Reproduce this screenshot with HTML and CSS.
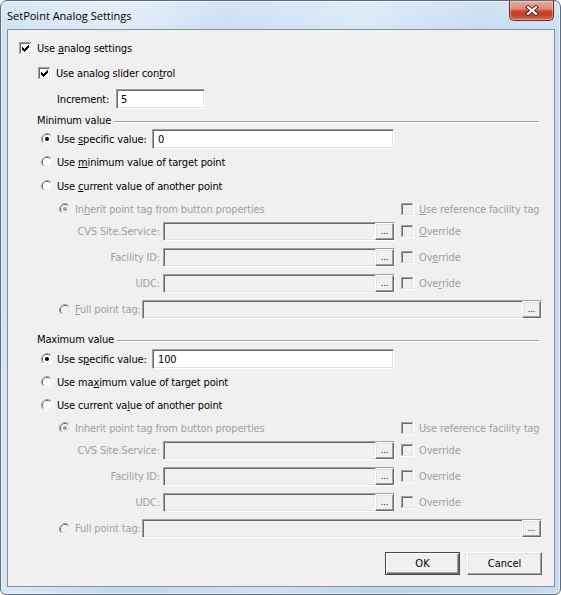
FILE: index.html
```html
<!DOCTYPE html>
<html>
<head>
<meta charset="utf-8">
<title>SetPoint Analog Settings</title>
<link rel="stylesheet" href="styles.css">
</head>
<body>
<svg class="defs" width="0" height="0" aria-hidden="true">
  <defs>
    <symbol id="cb-frame" viewBox="0 0 13 13">
      <path fill="#a0a0a0" d="M0 0h12v1H1v11H0z"/>
      <path fill="#ffffff" d="M12 0h1v13H0v-1h12z"/>
      <path fill="#696969" d="M1 1h10v1H2v9H1z"/>
      <path fill="#e3e3e3" d="M11 1h1v11H1v-1h10z"/>
    </symbol>
    <symbol id="cb-on" viewBox="0 0 13 13">
      <use href="#cb-frame"/>
      <rect x="2" y="2" width="9" height="9" fill="#ffffff"/>
      <path fill="#000" shape-rendering="crispEdges" d="M3 5h1v3H3zM4 6h1v3H4zM5 7h1v3H5zM6 6h1v3H6zM7 5h1v3H7zM8 4h1v3H8zM9 3h1v3H9z"/>
    </symbol>
    <symbol id="cb-dis" viewBox="0 0 13 13">
      <use href="#cb-frame"/>
      <rect x="2" y="2" width="9" height="9" fill="#f0f0f0"/>
    </symbol>
    <symbol id="rd-frame" viewBox="0 0 12 12">
      <path fill="none" stroke="#a0a0a0" d="M2.11 9.89A5.5 5.5 0 0 1 9.89 2.11"/>
      <path fill="none" stroke="#ffffff" d="M9.89 2.11A5.5 5.5 0 0 1 2.11 9.89"/>
      <path fill="none" stroke="#696969" d="M2.82 9.18A4.5 4.5 0 0 1 9.18 2.82"/>
      <path fill="none" stroke="#e3e3e3" d="M9.18 2.82A4.5 4.5 0 0 1 2.82 9.18"/>
    </symbol>
    <symbol id="rd-on" viewBox="0 0 12 12">
      <use href="#rd-frame"/>
      <circle cx="6" cy="6" r="4" fill="#ffffff"/>
      <circle cx="6" cy="6" r="2" fill="#000"/>
    </symbol>
    <symbol id="rd-off" viewBox="0 0 12 12">
      <use href="#rd-frame"/>
      <circle cx="6" cy="6" r="4" fill="#ffffff"/>
    </symbol>
    <symbol id="rd-on-dis" viewBox="0 0 12 12">
      <use href="#rd-frame"/>
      <circle cx="6" cy="6" r="4" fill="#f0f0f0"/>
      <circle cx="6" cy="6" r="2" fill="#a0a0a0"/>
    </symbol>
    <symbol id="rd-off-dis" viewBox="0 0 12 12">
      <use href="#rd-frame"/>
      <circle cx="6" cy="6" r="4" fill="#f0f0f0"/>
    </symbol>
  </defs>
</svg>

<div class="window">
  <div class="titlebar">
    <span class="title">SetPoint Analog Settings</span>
    <div class="close">
      <svg width="14" height="11" viewBox="0 0 14 11">
        <path d="M3 2.2L11 8.8M11 2.2L3 8.8" stroke="#4d2017" stroke-width="4" stroke-linecap="square"/>
        <path d="M3 2.2L11 8.8M11 2.2L3 8.8" stroke="#ffffff" stroke-width="2.2" stroke-linecap="square"/>
      </svg>
    </div>
  </div>

  <div class="client">
    <div class="row i0">
      <svg class="cb"><use href="#cb-on"/></svg>
      <span>Use <u>a</u>nalog settings</span>
    </div>
    <div class="row i1 mt5">
      <svg class="cb"><use href="#cb-on"/></svg>
      <span>Use analog slider con<u>t</u>rol</span>
    </div>
    <div class="row iinc mt6">
      <span class="inc-label">Increment:</span>
      <div class="edit inc-edit">5</div>
    </div>

    <div class="legend mt3"><span>Minimum value</span><div class="rule"></div></div>
    <div class="row i2 mt1">
      <svg class="rd"><use href="#rd-on"/></svg>
      <span class="spec-label">Use <u>s</u>pecific value:</span>
      <div class="edit spec-edit">0</div>
    </div>
    <div class="row i2 mt3">
      <svg class="rd"><use href="#rd-off"/></svg>
      <span>Use <u>m</u>inimum value of target point</span>
    </div>
    <div class="row i2 mt4">
      <svg class="rd"><use href="#rd-off"/></svg>
      <span>Use <u>c</u>urrent value of another point</span>
    </div>
    <div class="row split i3 mt3 dis">
      <div class="cell"><svg class="rd"><use href="#rd-on-dis"/></svg><span>In<u>h</u>erit point tag from button properties</span></div>
      <div class="cell"><svg class="cb"><use href="#cb-dis"/></svg><span><u>U</u>se reference facility tag</span></div>
    </div>
    <div class="row h19 split i3 mt3 dis">
      <div class="cell"><span class="field-label">CVS Site.Service:</span><div class="edit dis-edit field-edit"><span class="dots">...</span></div></div>
      <div class="cell"><svg class="cb"><use href="#cb-dis"/></svg><span><u>O</u>verride</span></div>
    </div>
    <div class="row h19 split i3 mt7 dis">
      <div class="cell"><span class="field-label">Facility ID:</span><div class="edit dis-edit field-edit"><span class="dots">...</span></div></div>
      <div class="cell"><svg class="cb"><use href="#cb-dis"/></svg><span>Ov<u>e</u>rride</span></div>
    </div>
    <div class="row h19 split i3 mt7 dis">
      <div class="cell"><span class="field-label">UDC:</span><div class="edit dis-edit field-edit"><span class="dots">...</span></div></div>
      <div class="cell"><svg class="cb"><use href="#cb-dis"/></svg><span>Ove<u>r</u>ride</span></div>
    </div>
    <div class="row h19 i3 mt7 dis">
      <svg class="rd"><use href="#rd-off-dis"/></svg>
      <span class="full-label"><u>F</u>ull point tag:</span>
      <div class="edit dis-edit full-edit"><span class="dots">...</span></div>
    </div>

    <div class="legend mt12 max"><span>Maximum value</span><div class="rule"></div></div>
    <div class="row i2 mt2">
      <svg class="rd"><use href="#rd-on"/></svg>
      <span class="spec-label">Use s<u>p</u>ecific value:</span>
      <div class="edit spec-edit">100</div>
    </div>
    <div class="row i2 mt3">
      <svg class="rd"><use href="#rd-off"/></svg>
      <span>Use ma<u>x</u>imum value of target point</span>
    </div>
    <div class="row i2 mt3">
      <svg class="rd"><use href="#rd-off"/></svg>
      <span>Use current va<u>l</u>ue of another point</span>
    </div>
    <div class="row split i3 mt3 dis">
      <div class="cell"><svg class="rd"><use href="#rd-on-dis"/></svg><span>Inherit point tag from button properties</span></div>
      <div class="cell"><svg class="cb"><use href="#cb-dis"/></svg><span>Use reference facility tag</span></div>
    </div>
    <div class="row h19 split i3 mt3 dis">
      <div class="cell"><span class="field-label">CVS Site.Service:</span><div class="edit dis-edit field-edit"><span class="dots">...</span></div></div>
      <div class="cell"><svg class="cb"><use href="#cb-dis"/></svg><span>Override</span></div>
    </div>
    <div class="row h19 split i3 mt7 dis">
      <div class="cell"><span class="field-label">Facility ID:</span><div class="edit dis-edit field-edit"><span class="dots">...</span></div></div>
      <div class="cell"><svg class="cb"><use href="#cb-dis"/></svg><span>Override</span></div>
    </div>
    <div class="row h19 split i3 mt7 dis">
      <div class="cell"><span class="field-label">UDC:</span><div class="edit dis-edit field-edit"><span class="dots">...</span></div></div>
      <div class="cell"><svg class="cb"><use href="#cb-dis"/></svg><span>Override</span></div>
    </div>
    <div class="row h19 i3 mt7 dis">
      <svg class="rd"><use href="#rd-off-dis"/></svg>
      <span class="full-label">Full point tag:</span>
      <div class="edit dis-edit full-edit"><span class="dots">...</span></div>
    </div>

    <div class="actions">
      <button class="btn default">OK</button>
      <button class="btn">Cancel</button>
    </div>
  </div>
</div>
</body>
</html>
```

FILE: styles.css
```css
* { box-sizing: border-box; }

html, body {
  margin: 0;
  padding: 0;
}

body {
  width: 561px;
  height: 595px;
  overflow: hidden;
  background: #ffffff;
  font-family: "DejaVu Sans", "Liberation Sans", sans-serif;
  font-stretch: condensed;
  font-size: 11px;
  letter-spacing: -0.15px;
  color: #000;
}

.defs {
  position: absolute;
  width: 0;
  height: 0;
}

.window {
  width: 561px;
  height: 595px;
  border: 1px solid #5d6c7c;
  border-radius: 7px 7px 6px 6px;
  background:
    linear-gradient(100deg, rgba(255,255,255,.15) 0%, rgba(255,255,255,.45) 18%, rgba(255,255,255,.05) 34%, rgba(255,255,255,.3) 55%, rgba(255,255,255,0) 72%, rgba(255,255,255,.15) 100%),
    linear-gradient(180deg, #d3e3f5 0px, #c6daf0 40px, #bed4ed 100%);
  box-shadow: inset 0 0 0 1px rgba(255,255,255,.55);
  padding: 0 5px 7px 6px;
  display: flex;
  flex-direction: column;
}

.titlebar {
  height: 28px;
  display: flex;
  align-items: center;
  flex: none;
}

.title {
  font-family: "Open Sans", "Noto Sans", sans-serif;
  font-stretch: normal;
  font-size: 11px;
  letter-spacing: 0;
  padding-left: 0;
  color: #000;
}

.close {
  margin-left: auto;
  margin-right: 1px;
  align-self: flex-start;
  width: 45px;
  height: 20px;
  border: 1px solid #6b2d22;
  border-top: none;
  border-radius: 0 0 5px 5px;
  background: linear-gradient(180deg, #e6ab9d 0%, #d98a77 42%, #c7482e 52%, #c0412a 75%, #d2735a 100%);
  box-shadow: inset 0 0 0 1px rgba(255,255,255,.35);
  display: flex;
  align-items: center;
  justify-content: center;
}

.client {
  flex: 1;
  border: 1px solid #84909e;
  background: #f0f0f0;
  padding-top: 8px;
  display: flex;
  flex-direction: column;
}

.row {
  display: flex;
  align-items: center;
  height: 20px;
  flex: none;
  white-space: nowrap;
}

.row.h19 { height: 19px; }

.i0 { padding-left: 11px; }
.i1 { padding-left: 30px; }
.i2 { padding-left: 33px; }
.i3 { padding-left: 51px; }
.iinc { padding-left: 49px; }

.mt1 { margin-top: 1px; }
.mt2 { margin-top: 2px; }
.mt3 { margin-top: 3px; }
.mt4 { margin-top: 4px; }
.mt5 { margin-top: 5px; }
.mt6 { margin-top: 6px; }
.mt7 { margin-top: 7px; }
.mt12 { margin-top: 12px; }

.cb {
  width: 13px;
  height: 13px;
  flex: none;
  margin-right: 5px;
}

.rd {
  width: 12px;
  height: 12px;
  flex: none;
  margin-right: 4px;
}

.dis { color: #a0a0a0; }

.split {
  display: grid;
  grid-template-columns: 342px auto;
  align-items: center;
}

.cell {
  display: flex;
  align-items: center;
  height: 100%;
}

.edit {
  display: flex;
  align-items: center;
  height: 20px;
  border: 1px solid;
  border-color: #a0a0a0 #ffffff #ffffff #a0a0a0;
  box-shadow: inset 1px 1px #696969, inset -1px -1px #e3e3e3;
  background: #ffffff;
  padding-left: 5px;
  color: #000;
  flex: none;
}

.inc-label { width: 59px; }
.inc-edit { width: 89px; padding-left: 4px; }

.spec-label { width: 95px; }
.spec-edit { width: 242px; }

.dis-edit {
  height: 19px;
  background: #f0f0f0;
  padding: 0;
  justify-content: flex-end;
  align-items: stretch;
}

.field-label {
  width: 101px;
  text-align: right;
}

.field-edit {
  width: 232px;
  margin-left: 3px;
}

.full-label { width: 67px; }
.full-edit { width: 400px; }

.dots {
  width: 19px;
  border: 1px solid;
  border-color: #ffffff #696969 #696969 #ffffff;
  box-shadow: inset -1px -1px #a0a0a0, inset 1px 1px #e3e3e3;
  background: #f0f0f0;
  color: #000;
  font-size: 9px;
  line-height: 1;
  display: flex;
  align-items: flex-end;
  justify-content: center;
  padding-bottom: 3px;
  letter-spacing: 0;
}

.legend {
  display: flex;
  height: 16px;
  padding-left: 29px;
  padding-right: 15px;
  flex: none;
  align-items: center;
}

.legend .rule {
  flex: 1;
  align-self: flex-start;
  margin-top: 9px;
  margin-left: 3px;
  border-top: 1px solid #a0a0a0;
  border-bottom: 1px solid #ffffff;
}

.actions {
  display: flex;
  justify-content: flex-end;
  gap: 7px;
  padding-right: 12px;
  margin-top: 14px;
  flex: none;
}

.btn {
  width: 75px;
  height: 23px;
  font: inherit;
  color: #000;
  background: #f0f0f0;
  border: 1px solid;
  border-color: #ffffff #696969 #696969 #ffffff;
  box-shadow: inset -1px -1px #a0a0a0, inset 1px 1px #e3e3e3;
  padding: 0;
}

.btn.default {
  border-color: #4a4a4a;
  box-shadow: inset 1px 1px #ffffff, inset -1px -1px #696969, inset -2px -2px #a0a0a0;
}
```
